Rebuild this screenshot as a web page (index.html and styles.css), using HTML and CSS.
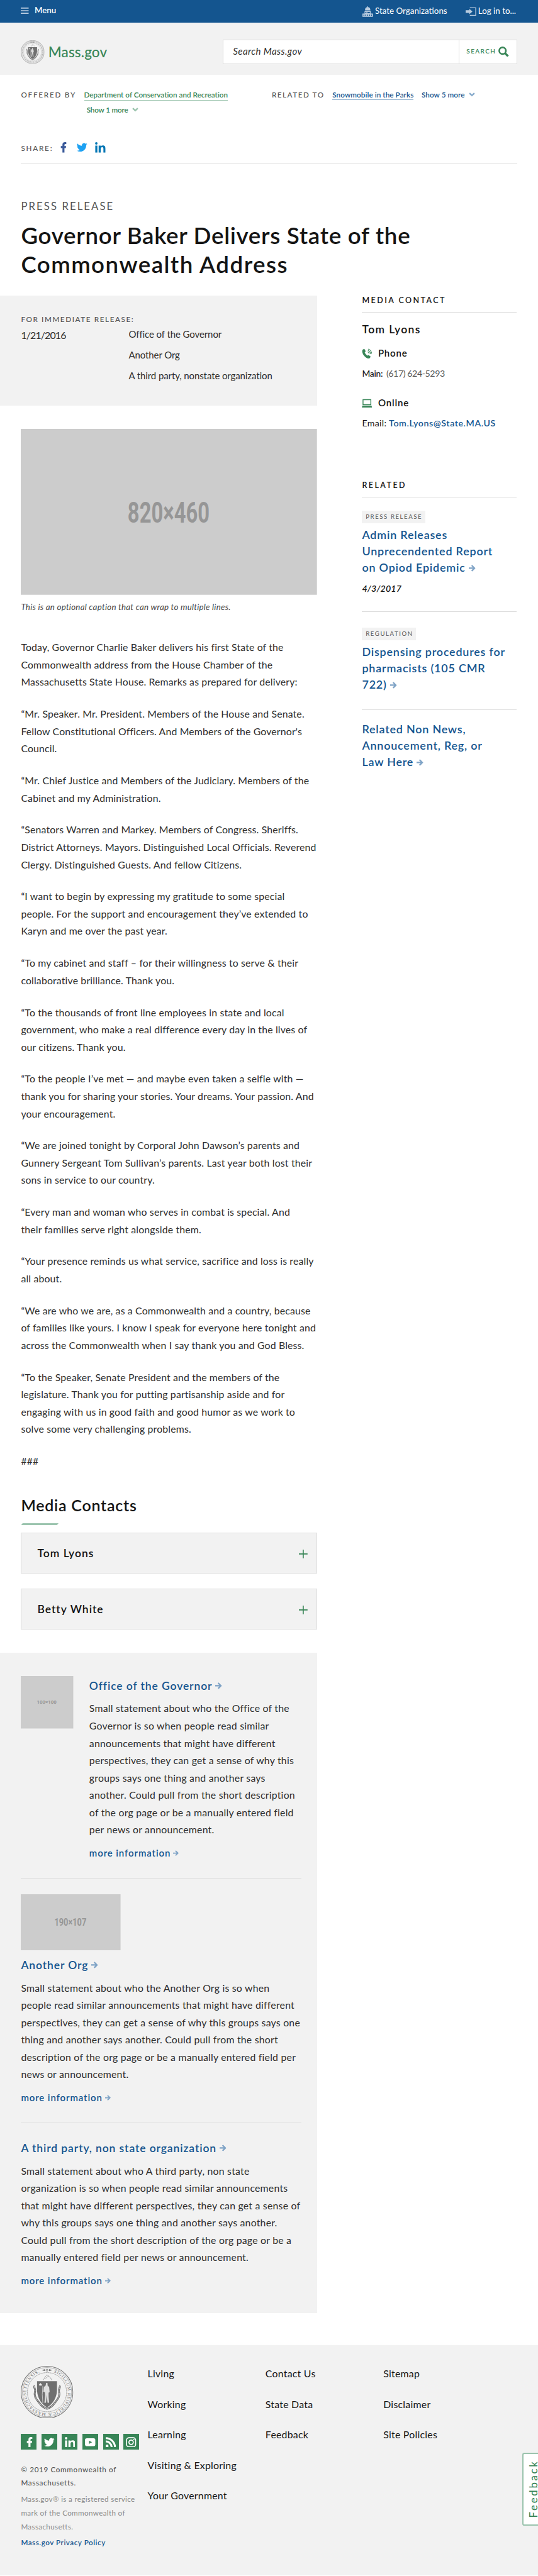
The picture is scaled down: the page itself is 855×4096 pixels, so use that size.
FILE: index.html
```html
<!DOCTYPE html>
<html lang="en">
<head>
<meta charset="utf-8">
<title>Governor Baker Delivers State of the Commonwealth Address | Mass.gov</title>
<link rel="stylesheet" href="styles.css">
</head>
<body>
<svg class="defs" aria-hidden="true">
  <symbol id="i-arrow" viewBox="0 0 13 13"><path d="M0 6.5H10.5M5.6 1.2l5.3 5.3-5.3 5.3" fill="none" stroke="currentColor" stroke-width="2.7"/></symbol>
  <symbol id="i-chevron" viewBox="0 0 12 8"><path d="M1.3 1.3 6 5.8l4.700-4.500" fill="none" stroke="currentColor" stroke-width="3"/></symbol>
  <symbol id="i-facebook" viewBox="0 0 24 24"><path d="M15 13.500h3.200l.6-4.600H15V6.600c0-1.500.5-2.300 2.200-2.300h2V.2C18.700.1 17.500 0 16 0c-3.400 0-5.600 2-5.600 5.800v3.100H6.700v4.600h3.700V24H15z" fill="currentColor"/></symbol>
  <symbol id="i-twitter" viewBox="0 0 24 24"><path d="M23.950 4.570a10 10 0 0 1-2.820.770 4.960 4.960 0 0 0 2.160-2.720 9.900 9.900 0 0 1-3.120 1.190 4.920 4.920 0 0 0-8.380 4.480A13.930 13.930 0 0 1 1.640 3.160a4.920 4.920 0 0 0 1.520 6.570 4.900 4.900 0 0 1-2.230-.610v.060a4.920 4.920 0 0 0 3.950 4.830 5 5 0 0 1-2.210.080 4.940 4.940 0 0 0 4.600 3.420A9.870 9.870 0 0 1 0 19.540a14 14 0 0 0 7.550 2.210c9.050 0 14-7.500 14-13.980 0-.210 0-.420-.020-.630a9.940 9.940 0 0 0 2.460-2.550z" fill="currentColor"/></symbol>
  <symbol id="i-linkedin" viewBox="0 0 24 24"><circle cx="3" cy="2.800" r="2.800" fill="currentColor"/><path d="M.6 7.800h4.800V24H.6zM8.300 7.800h4.600V10c.7-1.300 2.300-2.600 4.900-2.600 4.800 0 6.200 3 6.200 7.600v9h-4.800v-8.200c0-2.300-.3-4.200-2.700-4.200s-3.400 1.600-3.400 4V24H8.300z" fill="currentColor"/></symbol>
  <symbol id="i-youtube" viewBox="0 0 24 24"><path fill-rule="evenodd" d="M4.500 3h15Q24 3 24 7.500v9q0 4.500-4.500 4.500h-15Q0 21 0 16.500v-9Q0 3 4.500 3zm4.800 5.300v7.400l7-3.700z" fill="currentColor"/></symbol>
  <symbol id="i-rss" viewBox="0 0 24 24"><circle cx="3.200" cy="20.600" r="3.200" fill="currentColor"/><path d="M0 10.200A13.600 13.600 0 0 1 13.600 24M0 2.600A21.300 21.300 0 0 1 21.300 24" fill="none" stroke="currentColor" stroke-width="4.400"/></symbol>
  <symbol id="i-instagram" viewBox="0 0 24 24"><rect x="1.500" y="1.500" width="21" height="21" rx="6" fill="none" stroke="currentColor" stroke-width="2.400"/><circle cx="12" cy="12" r="5" fill="none" stroke="currentColor" stroke-width="2.400"/><circle cx="18.300" cy="5.700" r="1.400" fill="currentColor"/></symbol>
  <symbol id="i-seal" viewBox="0 0 100 100">
    <g fill="none" stroke="currentColor">
      <circle cx="50" cy="50" r="49.300" stroke-width="1.200"/>
      <circle cx="50" cy="50" r="46.900" stroke-width=".6"/>
      <circle cx="50" cy="50" r="37.300" stroke-width="1" stroke-dasharray="1 .7"/>
      <path d="M27 38c-4 1 2 6 0 12-2 8 3 14 8 20 4 6 9 10 15 11.500 6-1.500 11-5.500 15-11.500 5-6 10-12 8-20-2-6 4-11 0-12" stroke-width="3.600"/>
      <path d="M27 38c-4 1 2 6 0 12-2 8 3 14 8 20 4 6 9 10 15 11.500 6-1.500 11-5.500 15-11.500 5-6 10-12 8-20-2-6 4-11 0-12" stroke="#f2f2f2" stroke-width="1" stroke-dasharray="2 1"/>
      <path d="M43 27c2-4 4-8 7-10 3 2 8 6 9 10M47 24l6-5" stroke-width=".7"/>
    </g>
    <path d="M40 8l6-2v4zM60 8l-6-2v4z" fill="currentColor"/><circle cx="50" cy="8" r="2" fill="none" stroke="currentColor" stroke-width="1"/>
    <path d="M31 29h38v16c0 14-7 27-19 34-12-7-19-20-19-34z" fill="currentColor"/>
    <path d="M37.500 32l1 2.500h2.500l-2 1.600.8 2.600-2.300-1.500-2.300 1.500.8-2.600-2-1.600h2.500z" fill="#f2f2f2"/>
    <path d="M48 33q1.500-2 3 0v4l3 3 1 10-2 1v8l1 11h-3l-1.500-15L48 70h-3l1.500-14-.5-6-3-1 1-9 3.500-3z" fill="#f2f2f2" opacity=".85"/>
    <path d="M42 38q-2 16 0 33" fill="none" stroke="#f2f2f2" stroke-width=".8"/>
  </symbol>
</svg>

<header>
  <div class="utility">
    <a class="utility-menu"><svg class="ico-menu" viewBox="0 0 15 12"><path d="M0 1h15M0 6h15M0 11h15" stroke="currentColor" stroke-width="2"/></svg><span>Menu</span></a>
    <nav class="utility-nav">
      <a class="u-orgs"><svg class="ico-u" viewBox="0 0 20 20"><path fill="currentColor" fill-rule="evenodd" d="M9.300 0h1.400v1.500A5.200 5.200 0 0 1 15 6.800v.9H5v-.9a5.200 5.200 0 0 1 4.300-5.300zM4 9h12v4.700h4V20H0v-6.300h4zm1.500 1.800v2.400h1.600v-2.400zm2.500 0v2.400h1.600v-2.400zm2.500 0v2.400h1.600v-2.400zm2.500 0v2.400h1.600v-2.400zM2 16v2h1.700v-2zm3.500 0v2h1.700v-2zm3.600 0v2h1.700v-2zm3.600 0v2h1.700v-2zm3.600 0v2H18v-2z"/></svg><span>State Organizations</span></a>
      <a class="u-login"><svg class="ico-u" viewBox="0 0 20 20"><path d="M8 2.800h11.200v14.400H8" fill="none" stroke="currentColor" stroke-width="1.500"/><path d="M0 7.500h7V4.800l6 5.200-6 5.200v-2.700H0z" fill="currentColor"/></svg><span>Log in to...</span></a>
    </nav>
  </div>
  <div class="brandbar">
    <a class="brand"><svg class="seal-sm" viewBox="0 0 100 100"><use href="#i-seal"/><circle cx="50" cy="50" r="42.300" fill="none" stroke="currentColor" stroke-width="5" stroke-dasharray="2 2.600" opacity=".6"/></svg><span>Mass.gov</span></a>
    <form class="search">
      <span class="search-field">Search Mass.gov</span>
      <span class="search-btn"><span>SEARCH</span><svg viewBox="0 0 20 20"><circle cx="8" cy="8" r="6.300" fill="none" stroke="currentColor" stroke-width="3.200"/><path d="M12.500 12.500l6 6" stroke="currentColor" stroke-width="4"/></svg></span>
    </form>
  </div>
</header>

<section class="relations">
  <div class="offered"><span class="rel-label">OFFERED BY</span>
    <div class="rel-list green"><div><a class="rel-link">Department of Conservation and Recreation</a></div><a class="show-more more-1">Show 1 more <svg><use href="#i-chevron"/></svg></a></div>
  </div>
  <div class="related-to"><span class="rel-label">RELATED TO</span>
    <div class="rel-list blue inline"><a class="rel-link">Snowmobile in the Parks</a><a class="show-more">Show 5 more <svg><use href="#i-chevron"/></svg></a></div>
  </div>
</section>
<div class="share"><span class="share-label">SHARE:</span>
  <svg class="fb"><use href="#i-facebook"/></svg><svg class="tw"><use href="#i-twitter"/></svg><svg class="li"><use href="#i-linkedin"/></svg>
</div>

<div class="page-title">
  <div class="eyebrow">PRESS RELEASE</div>
  <h1><span>Governor Baker Delivers State of the</span> <span class="h1-end">Commonwealth Address</span></h1>
</div>

<main class="layout">
  <article class="content">
    <div class="release">
      <div class="release-label">FOR IMMEDIATE RELEASE:</div>
      <div class="release-row"><div class="release-date">1/21/2016</div>
        <ul class="release-orgs"><li>Office of the Governor</li><li>Another Org</li><li>A third party, nonstate organization</li></ul>
      </div>
    </div>
    <figure class="figure">
      <svg class="ph" viewBox="0 0 564 316"><rect width="564" height="316" fill="#ccc"/><text class="ph-text" x="203.500" y="178.500" font-size="56" textLength="156" lengthAdjust="spacingAndGlyphs">820×460</text></svg>
      <figcaption>This is an optional caption that can wrap to multiple lines.</figcaption>
    </figure>
    <div class="prose">
      <p>Today, Governor Charlie Baker delivers his first State of the<br>Commonwealth address from the House Chamber of the<br>Massachusetts State House. Remarks as prepared for delivery:</p>
      <p>“Mr. Speaker. Mr. President. Members of the House and Senate.<br>Fellow Constitutional Officers. And Members of the Governor's<br>Council.</p>
      <p>“Mr. Chief Justice and Members of the Judiciary. Members of the<br>Cabinet and my Administration.</p>
      <p>“Senators Warren and Markey. Members of Congress. Sheriffs.<br>District Attorneys. Mayors. Distinguished Local Officials. Reverend<br>Clergy. Distinguished Guests. And fellow Citizens.</p>
      <p>“I want to begin by expressing my gratitude to some special<br>people. For the support and encouragement they’ve extended to<br>Karyn and me over the past year.</p>
      <p>“To my cabinet and staff – for their willingness to serve &amp; their<br>collaborative brilliance. Thank you.</p>
      <p>“To the thousands of front line employees in state and local<br>government, who make a real difference every day in the lives of<br>our citizens. Thank you.</p>
      <p>“To the people I’ve met — and maybe even taken a selfie with —<br>thank you for sharing your stories. Your dreams. Your passion. And<br>your encouragement.</p>
      <p>“We are joined tonight by Corporal John Dawson’s parents and<br>Gunnery Sergeant Tom Sullivan’s parents. Last year both lost their<br>sons in service to our country.</p>
      <p>“Every man and woman who serves in combat is special. And<br>their families serve right alongside them.</p>
      <p>“Your presence reminds us what service, sacrifice and loss is really<br>all about.</p>
      <p>“We are who we are, as a Commonwealth and a country, because<br>of families like yours. I know I speak for everyone here tonight and<br>across the Commonwealth when I say thank you and God Bless.</p>
      <p>“To the Speaker, Senate President and the members of the<br>legislature. Thank you for putting partisanship aside and for<br>engaging with us in good faith and good humor as we work to<br>solve some very challenging problems.</p>
      <p>###</p>
    </div>
    <section class="contacts">
      <h2>Media Contacts</h2>
      <div class="accordion"><span>Tom Lyons</span><svg viewBox="0 0 16 16"><path d="M0 8h16M8 0v16" stroke="currentColor" stroke-width="2"/></svg></div>
      <div class="accordion"><span>Betty White</span><svg viewBox="0 0 16 16"><path d="M0 8h16M8 0v16" stroke="currentColor" stroke-width="2"/></svg></div>
    </section>
    <section class="orgs">
      <div class="org org-side">
        <svg class="ph ph-100" viewBox="0 0 100 100"><rect width="100" height="100" fill="#ccc"/><text class="ph-text" x="30.500" y="53.300" font-size="9.500" textLength="37.500" lengthAdjust="spacing">100×100</text></svg>
        <div class="org-body">
          <h3>Office of the Governor <svg class="arrow"><use href="#i-arrow"/></svg></h3>
          <p>Small statement about who the Office of the<br>Governor is so when people read similar<br>announcements that might have different<br>perspectives, they can get a sense of why this<br>groups says one thing and another says<br>another. Could pull from the short description<br>of the org page or be a manually entered field<br>per news or announcement.</p>
          <a class="more">more information <svg class="arrow"><use href="#i-arrow"/></svg></a>
        </div>
      </div>
      <div class="org">
        <svg class="ph ph-190" viewBox="0 0 190 107"><rect width="190" height="107" fill="#ccc"/><text class="ph-text" x="64" y="60" font-size="19.500" textLength="61" lengthAdjust="spacingAndGlyphs">190×107</text></svg>
        <h3>Another Org <svg class="arrow"><use href="#i-arrow"/></svg></h3>
        <p>Small statement about who the Another Org is so when<br>people read similar announcements that might have different<br>perspectives, they can get a sense of why this groups says one<br>thing and another says another. Could pull from the short<br>description of the org page or be a manually entered field per<br>news or announcement.</p>
        <a class="more">more information <svg class="arrow"><use href="#i-arrow"/></svg></a>
      </div>
      <div class="org org-plain">
        <h3>A third party, non state organization <svg class="arrow"><use href="#i-arrow"/></svg></h3>
        <p>Small statement about who A third party, non state<br>organization is so when people read similar announcements<br>that might have different perspectives, they can get a sense of<br>why this groups says one thing and another says another.<br>Could pull from the short description of the org page or be a<br>manually entered field per news or announcement.</p>
        <a class="more">more information <svg class="arrow"><use href="#i-arrow"/></svg></a>
      </div>
    </section>
  </article>

  <aside class="sidebar">
    <section class="contact">
      <h2 class="side-head">MEDIA CONTACT</h2>
      <h3 class="contact-name">Tom Lyons</h3>
      <h4><svg viewBox="0 0 20 20"><path d="M2.500 1.500 5 .8l2.600 4.500-1.900 2.200c.8 2.400 2.700 4.700 5.200 6.300l2.400-1.300 4 3.300-1.300 2.400c-1.500 1.800-4.300 1.500-6.900 0C4.300 15.300.8 9.700.8 5c0-1.500.7-2.900 1.700-3.500z" fill="currentColor"/><path d="M11.500 6.500a4 4 0 0 1 2.800 4M12 3.700a7 7 0 0 1 4.700 6.800M12.500 1a9.500 9.500 0 0 1 6.500 9" fill="none" stroke="currentColor" stroke-width="1.300"/></svg><span>Phone</span></h4>
      <div class="contact-line main-line"><b>Main:</b> <span class="num">(617) 624-5293</span></div>
      <h4 class="online"><svg viewBox="0 0 20 20"><path fill="currentColor" fill-rule="evenodd" d="M1.500 2h17v11.500h-17zm1.700 1.700v8h13.600v-8zM1 14.500h18l1 3.800H0z"/></svg><span>Online</span></h4>
      <div class="contact-line"><span class="email-label">Email:</span> <a class="email">Tom.Lyons@State.MA.US</a></div>
    </section>
    <section class="related">
      <h2 class="side-head">RELATED</h2>
      <div class="rel-item"><span class="tag">PRESS RELEASE</span>
        <h3>Admin Releases<br>Unprecendented Report<br>on Opiod Epidemic <svg class="arrow"><use href="#i-arrow"/></svg></h3>
        <div class="date">4/3/2017</div></div>
      <div class="rel-item"><span class="tag">REGULATION</span>
        <h3>Dispensing procedures for<br>pharmacists (105 CMR<br>722) <svg class="arrow"><use href="#i-arrow"/></svg></h3></div>
      <div class="rel-item">
        <h3>Related Non News,<br>Annoucement, Reg, or<br>Law Here <svg class="arrow"><use href="#i-arrow"/></svg></h3></div>
    </section>
  </aside>
</main>

<footer class="footer">
  <div class="footer-about">
    <svg class="seal-lg" viewBox="0 0 100 100"><use href="#i-seal"/>
      <path id="seal-ring" d="M50 10.200a39.800 39.800 0 0 1 0 79.600a39.800 39.800 0 0 1 0-79.600" fill="none"/>
      <text class="seal-text" fill="currentColor"><textPath href="#seal-ring" startOffset="13" textLength="222" lengthAdjust="spacing">SIGILLUM REIPUBLICÆ MASSACHUSETTENSIS.</textPath></text>
    </svg>
    <div class="social">
      <a><svg><use href="#i-facebook"/></svg></a><a><svg><use href="#i-twitter"/></svg></a><a><svg><use href="#i-linkedin"/></svg></a><a><svg><use href="#i-youtube"/></svg></a><a><svg><use href="#i-rss"/></svg></a><a><svg><use href="#i-instagram"/></svg></a>
    </div>
    <p class="copy">© 2019 Commonwealth of<br>Massachusetts.</p>
    <p class="mark">Mass.gov® is a registered service<br>mark of the Commonwealth of<br>Massachusetts.</p>
    <a class="privacy">Mass.gov Privacy Policy</a>
  </div>
  <nav class="footer-nav">
    <ul><li>Living</li><li>Working</li><li>Learning</li><li>Visiting &amp; Exploring</li><li>Your Government</li></ul>
    <ul><li>Contact Us</li><li>State Data</li><li>Feedback</li></ul>
    <ul><li>Sitemap</li><li>Disclaimer</li><li>Site Policies</li></ul>
  </nav>
  <a class="feedback-tab"><span>Feedback</span></a>
</footer>
</body>
</html>
```
FILE: styles.css
```css
html { font-size: 8.346px; }
body { margin: 0; font-family: Lato, "Open Sans", sans-serif; color: #141414; background: #fff; white-space: nowrap; overflow-x: hidden; }
h1, h2, h3, h4, p, ul, figure { margin: 0; padding: 0; }
h1, h2, h3, h4 { font-weight: 600; }
ul { list-style: none; }
svg { display: block; flex: none; }
.defs { position: absolute; width: 0; height: 0; }
.seal-text { font: 8.4px "Liberation Serif", serif; }

/* Utility bar */
.utility { box-sizing: border-box; height: 4.3rem; padding: 0 4rem; background: #14558f; color: #fff; display: flex; justify-content: space-between; font-size: 1.6rem; line-height: 4rem; }
.utility svg { color: #b9cce0; }
.utility-menu { display: flex; gap: 1.1rem; font-weight: 600; letter-spacing: -.006rem; }
.ico-menu { width: 1.5rem; height: 1.2rem; margin-top: 1.4rem; }
.utility-nav { display: flex; padding-top: .1rem; }
.utility-nav a { display: flex; gap: .4rem; }
.u-orgs { margin-right: 3.5rem; }
.u-login { width: 9.8rem; }
.ico-u { width: 2rem; height: 2rem; margin-top: 1.1rem; }

/* Brand and search */
.brandbar { box-sizing: border-box; height: 10rem; padding: 3.3rem 4rem 0; background: #f2f2f2; display: flex; justify-content: space-between; }
.brand { display: flex; gap: .7rem; color: #388557; font-size: 2.7rem; font-weight: 500; line-height: 4.7rem; letter-spacing: .015rem; }
.seal-sm { width: 4.5rem; height: 4.5rem; margin-top: .1rem; color: #707070; }
.search { box-sizing: border-box; width: 56rem; height: 4.6rem; border: .2rem solid #dcdcdc; background: #fff; display: flex; line-height: 4.2rem; }
.search-field { flex: 1; padding-left: 1.8rem; font-size: 1.8rem; color: #2e2e2e; font-style: italic; letter-spacing: .051rem; }
.search-btn { width: 9.5rem; padding-left: 1.4rem; border-left: .2rem solid #dcdcdc; display: flex; gap: .45rem; color: #388557; font-size: 1.2rem; font-weight: 600; letter-spacing: .165rem; }
.search-btn svg { width: 2rem; height: 2rem; margin-top: 1.1rem; }

/* Relationship indicators */
.relations { padding: 2.25rem 4rem 0; display: flex; font-size: 1.4rem; font-weight: 600; line-height: 2.9rem; }
.offered { display: flex; width: 47.75rem; }
.related-to { display: flex; }
.rel-label { color: #535353; letter-spacing: .213rem; width: 12rem; font-weight: 500; }
.related-to .rel-label { width: 11.55rem; letter-spacing: .184rem; }
.green { color: #388557; letter-spacing: .003rem; }
.blue { color: #14558f; letter-spacing: .011rem; }
.inline { display: flex; align-items: flex-start; gap: 1.5rem; }
.rel-link { padding-bottom: .2rem; border-bottom: .1rem solid #9bc4ae; }
.blue .rel-link { height: 2.4rem; border-color: #8fafce; padding-bottom: 0; }
.show-more { display: flex; align-items: center; gap: .8rem; height: 2.9rem; }
.show-more svg { width: 1.2rem; height: .8rem; color: #9bc4ae; }
.blue .show-more svg { color: #8aadcd; }
.more-1 { padding-left: .5rem; letter-spacing: -.02rem; }
.share { margin: 4.4rem 4rem 0; height: 4.4rem; border-bottom: .1rem solid #dcdcdc; display: flex; align-items: flex-start; }
.share-label { width: 7.05rem; font-size: 1.4rem; font-weight: 500; line-height: 3rem; letter-spacing: .214rem; color: #535353; }
.share svg { width: 2rem; height: 2rem; margin-top: .35rem; }
.share .fb { color: #3b5a9a; }
.share .tw { color: #1da1f2; margin-left: 1.55rem; }
.share .li { color: #0077b5; margin-left: 1.5rem; }

/* Title */
.page-title { padding: 6.87rem 4rem 0; }
.eyebrow { font-size: 2rem; line-height: 2.4rem; letter-spacing: .25rem; color: #535353; }
h1 { margin-top: 1.67rem; font-size: 4.4rem; line-height: 5.5rem; letter-spacing: .083rem; }
h1 span { display: block; }
.h1-end { letter-spacing: .172rem; }

.layout { margin-top: 3.05rem; display: flex; align-items: flex-start; }
.content { width: 60.4rem; }
.release { box-sizing: border-box; height: 21rem; padding: 3.6rem 0 0 4rem; background: #f2f2f2; }
.release-label { font-size: 1.4rem; line-height: 1.8rem; font-weight: 500; letter-spacing: .192rem; color: #535353; }
.release-row { display: flex; color: #2e2e2e; }
.release-date { width: 20.5rem; font-size: 1.9rem; line-height: 4.3rem; letter-spacing: -.1rem; }
.release-orgs { font-size: 1.8rem; line-height: 4rem; letter-spacing: -.013rem; }

.figure { margin: 4.5rem 0 0 4rem; }
.ph { width: 56.4rem; height: 31.6rem; }
.ph-text { font-family: Roboto, sans-serif; font-weight: 700; fill: #969696; }
figcaption { margin-top: 1.13rem; font-size: 1.6rem; line-height: 2.4rem; font-style: italic; color: #454545; letter-spacing: .03rem; }
.prose { margin: 4.78rem 0 0 4rem; }
.prose p, .org p { font-size: 1.9rem; line-height: 3.3rem; color: #2e2e2e; letter-spacing: .018rem; }
.prose p + p { margin-top: 2.785rem; }

.contacts { margin: 4.92rem 0 0 4rem; }
.contacts h2 { font-size: 3rem; line-height: 3.6rem; letter-spacing: .09rem; padding-bottom: 1.66rem; margin-bottom: 1.9rem; position: relative; }
.contacts h2::after { content: ""; position: absolute; left: .25rem; top: 100%; width: 6.85rem; height: .3rem; background: #9bc4ae; transform: skewX(-40deg); }
.accordion { box-sizing: border-box; height: 7.7rem; border: .2rem solid #dcdcdc; background: #f2f2f2; padding: 0 1.7rem 0 3rem; display: flex; align-items: center; justify-content: space-between; font-size: 2.1rem; font-weight: 600; letter-spacing: .12rem; }
.accordion + .accordion { margin-top: 2.95rem; }
.accordion svg { width: 1.65rem; height: 1.65rem; color: #388557; margin-top: .3rem; }

.orgs { margin-top: 4.45rem; padding: 4.5rem 3rem 4.91rem 4rem; background: #f2f2f2; }
.org + .org { margin-top: 3.43rem; border-top: .1rem solid #dcdcdc; padding-top: 3rem; }
.org + .org-plain { padding-top: 3.48rem; }
.org-side { display: flex; gap: 3rem; }
.org-side .org-body { padding-top: .53rem; }
.ph-100 { width: 10rem; height: 10rem; }
.ph-190 { width: 19rem; height: 10.7rem; margin-bottom: 1.5rem; }
.org h3 { display: flex; align-items: center; gap: .6rem; font-size: 2.1rem; line-height: 2.6rem; letter-spacing: .107rem; color: #14558f; }
.org p { margin-top: 1.33rem; letter-spacing: .026rem; }
.more { display: flex; align-items: center; gap: .5rem; margin-top: 1.53rem; font-size: 1.8rem; line-height: 2.6rem; font-weight: 600; letter-spacing: .105rem; color: #14558f; }
.arrow { width: 1.3rem; height: 1.3rem; color: #7fa3c6; }
.more .arrow { width: 1.1rem; height: 1.1rem; }

/* Sidebar */
.sidebar { margin-left: 8.55rem; width: 29.45rem; }
.side-head { font-size: 1.5rem; line-height: 2rem; letter-spacing: .293rem; padding-bottom: 1.2rem; border-bottom: .2rem solid #dcdcdc; }
.contact-name { margin-top: 1.9rem; font-size: 2.1rem; line-height: 2.6rem; letter-spacing: .165rem; }
.contact h4 { display: flex; gap: 1.1rem; margin-top: 1.97rem; font-size: 1.8rem; line-height: 2.4rem; letter-spacing: .1rem; }
.contact h4 svg { width: 1.95rem; height: 2rem; margin-top: .3rem; color: #388557; }
.contact h4.online { margin-top: 3.16rem; }
.contact-line { margin-top: 1.5rem; font-size: 1.7rem; line-height: 2.4rem; }
.contact-line b { font-size: 1.65rem; font-weight: 500; letter-spacing: -.03rem; margin-right: .25rem; }
.num { color: #555; letter-spacing: -.05rem; }
.email-label { letter-spacing: .04rem; }
.email { color: #14558f; font-weight: 600; letter-spacing: .072rem; }
.related { margin-top: 9.7rem; }
.tag { display: inline-block; vertical-align: top; padding: 0 .55rem 0 .7rem; background: #f2f2f2; font-size: 1.15rem; line-height: 2.4rem; letter-spacing: .19rem; color: #535353; }
.rel-item { padding-top: 2.5rem; }
.rel-item + .rel-item { margin-top: 3.2rem; border-top: .1rem solid #dcdcdc; padding-top: 2.95rem; }
.rel-item + .rel-item:last-child { padding-top: 1.45rem; }
.rel-item h3 { margin-top: .7rem; font-size: 2.15rem; line-height: 3.1rem; letter-spacing: .095rem; color: #14558f; }
.rel-item .arrow { display: inline-block; }
.date { margin-top: 1.2rem; font-size: 1.7rem; line-height: 2.4rem; font-weight: 600; font-style: italic; letter-spacing: .02rem; }

/* Footer */
.footer { position: relative; box-sizing: border-box; height: 43.95rem; margin-top: 6rem; padding: 4rem 0 0 4rem; background: #f2f2f2; display: flex; overflow: hidden; }
.footer-about { width: 24.1rem; font-size: 1.4rem; line-height: 2.6rem; }
.seal-lg { width: 10rem; height: 10rem; color: #707070; }
.social { margin-top: 3rem; display: flex; gap: .9rem; }
.social a { width: 3rem; height: 3rem; background: #388557; color: #fff; display: flex; align-items: center; justify-content: center; }
.social svg { width: 2rem; height: 2rem; }
.copy { margin-top: 2.43rem; font-weight: 500; letter-spacing: .076rem; color: #535353; }
.mark { margin-top: .5rem; letter-spacing: .04rem; color: #8a8a8a; }
.privacy { display: block; margin-top: .43rem; font-weight: 600; letter-spacing: .064rem; color: #14558f; }
.footer-nav { margin-top: -1.37rem; display: flex; font-size: 1.9rem; line-height: 5.8rem; letter-spacing: .03rem; }
.footer-nav ul { width: 22.45rem; }
.feedback-tab { position: absolute; right: 0; top: 20.6rem; box-sizing: border-box; width: 3rem; height: 13.8rem; border: .35rem solid #9bc4ae; border-right: 0; border-radius: .4rem 0 0 .4rem; background: #fff; overflow: hidden; }
.feedback-tab span { display: block; width: 2.4rem; height: 12.15rem; margin-left: .7rem; writing-mode: vertical-rl; transform: rotate(180deg); font-size: 2rem; line-height: 2.4rem; letter-spacing: .33rem; font-weight: 500; color: #388557; }
```
